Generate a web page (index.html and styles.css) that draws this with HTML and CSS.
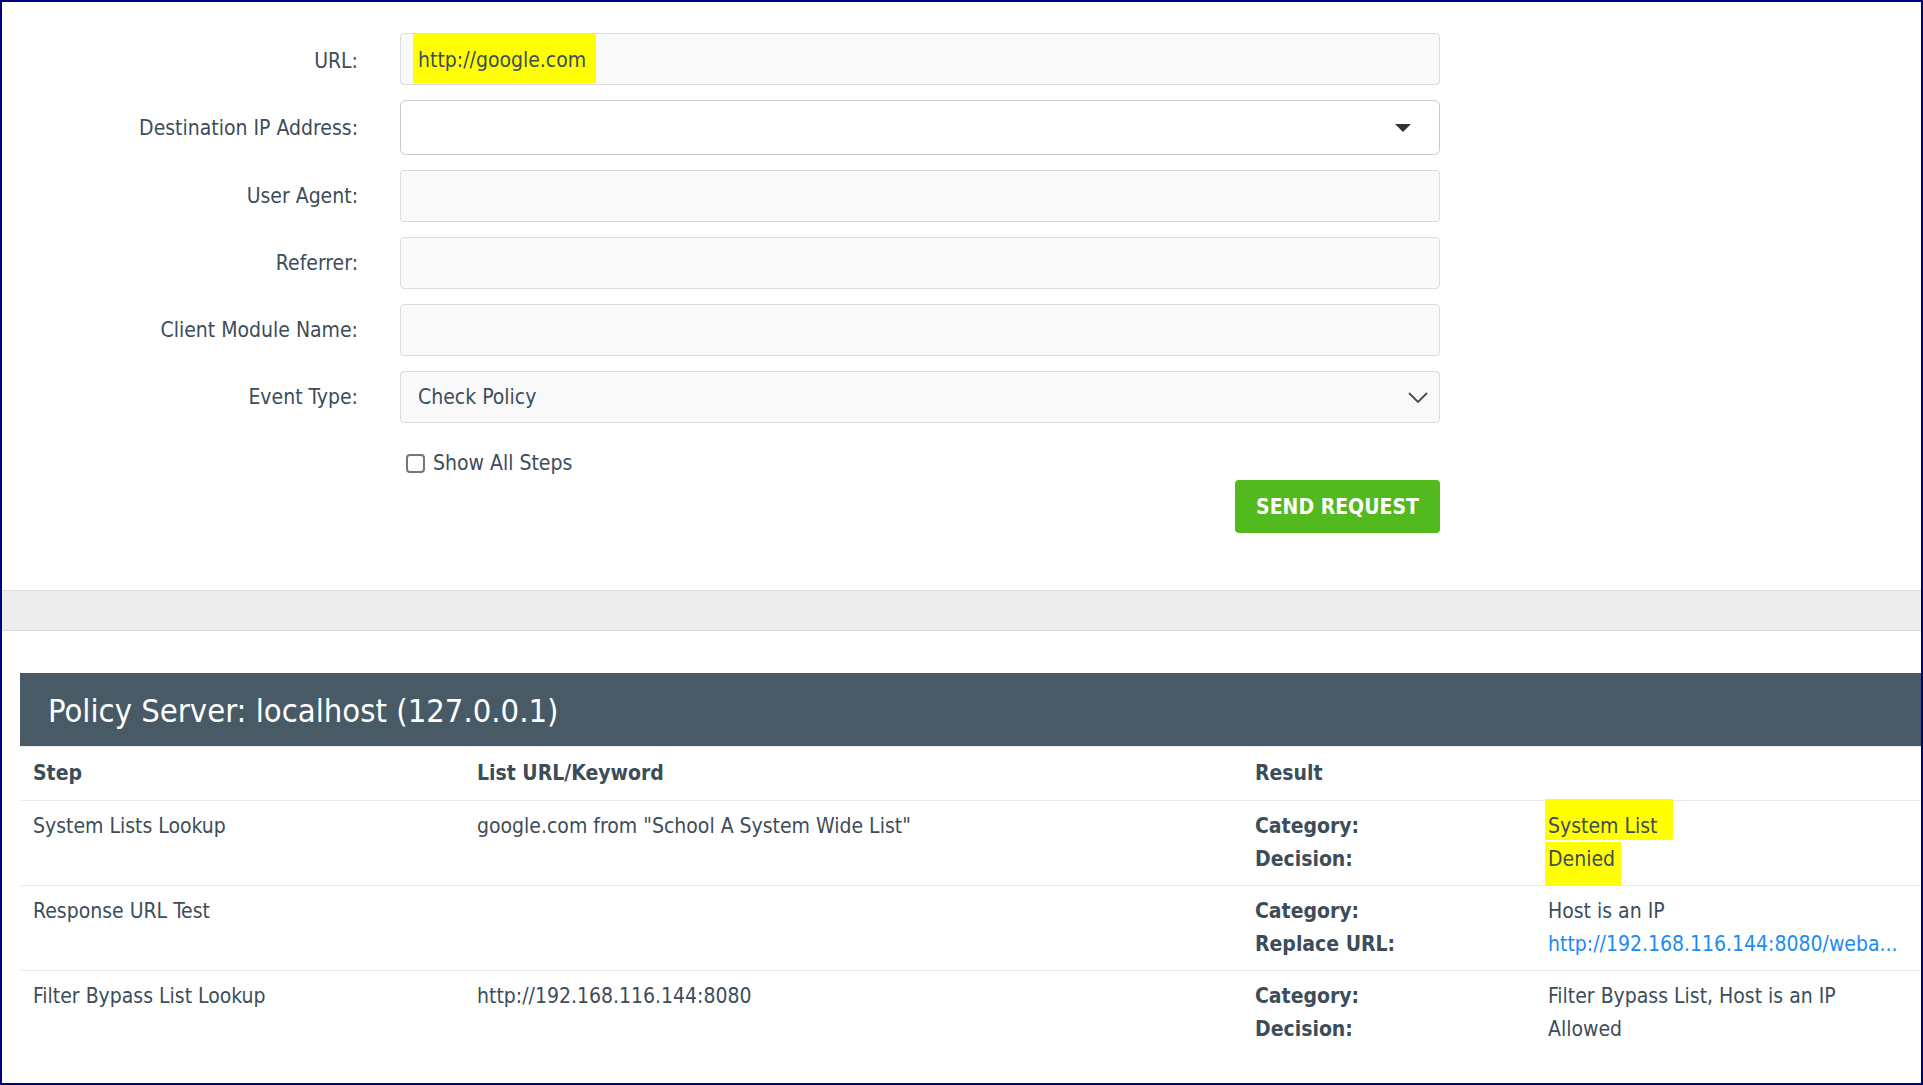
FILE: index.html
```html
<!DOCTYPE html>
<html lang="en">
<head>
    <meta charset="UTF-8">
    <meta name="viewport" content="width=device-width, initial-scale=1.0">
    <title>Test Policy</title>
    <link rel="stylesheet" href="styles.css">
</head>
<body>
    <div class="frame">
        <form class="test-form">
            <label class="form-label label-url">URL:</label>
            <div class="field">
                <span class="marker marker-url">http://google.com</span>
            </div>

            <label class="form-label">Destination IP Address:</label>
            <div class="select select-white">
                <span></span>
                <svg class="caret" width="16" height="8" viewBox="0 0 16 8"><path d="M0 0h16L8 8z" fill="#333"/></svg>
            </div>

            <label class="form-label">User Agent:</label>
            <input class="field" type="text">

            <label class="form-label">Referrer:</label>
            <input class="field" type="text">

            <label class="form-label">Client Module Name:</label>
            <input class="field" type="text">

            <label class="form-label">Event Type:</label>
            <div class="select">
                <span>Check Policy</span>
                <svg class="chevron" width="20" height="11" viewBox="0 0 20 11"><path d="M1 1l9 9 9-9" fill="none" stroke="#3c4d59" stroke-width="1.8"/></svg>
            </div>

            <div class="form-actions">
                <label class="check">
                    <input type="checkbox">
                    <span>Show All Steps</span>
                </label>
                <button type="button" class="send-button">Send Request</button>
            </div>
        </form>

        <div class="band"></div>

        <section class="results">
            <h2 class="server-title">Policy Server: localhost (127.0.0.1)</h2>
            <table class="steps">
                <colgroup>
                    <col class="col-step">
                    <col class="col-list">
                    <col class="col-result">
                    <col>
                </colgroup>
                <thead>
                    <tr>
                        <th>Step</th>
                        <th>List URL/Keyword</th>
                        <th>Result</th>
                        <th></th>
                    </tr>
                </thead>
                <tbody>
                    <tr>
                        <td>System Lists Lookup</td>
                        <td>google.com from "School A System Wide List"</td>
                        <td class="result-label">Category:<br>Decision:</td>
                        <td>
                            <span class="marker marker-first">System List</span><br>
                            <span class="marker marker-second">Denied</span>
                        </td>
                    </tr>
                    <tr>
                        <td>Response URL Test</td>
                        <td></td>
                        <td class="result-label">Category:<br>Replace URL:</td>
                        <td>
                            Host is an IP<br>
                            <a class="link" href="#">http://192.168.116.144:8080/weba...</a>
                        </td>
                    </tr>
                    <tr>
                        <td>Filter Bypass List Lookup</td>
                        <td>http://192.168.116.144:8080</td>
                        <td class="result-label">Category:<br>Decision:</td>
                        <td>Filter Bypass List, Host is an IP<br>Allowed</td>
                    </tr>
                </tbody>
            </table>
        </section>
    </div>
</body>
</html>
```

FILE: styles.css
```css
body {
    margin: 0;
    font-family: "DejaVu Sans Condensed", "DejaVu Sans", sans-serif;
    font-stretch: condensed;
    font-size: 21px;
    color: #3c4d59;
    background: white;
}

.frame {
    width: 1923px;
    height: 1085px;
    box-sizing: border-box;
    border: 2px solid #00007f;
    overflow: hidden;
}

/* formulario */
.test-form {
    display: grid;
    grid-template-columns: 356px 1040px;
    column-gap: 42px;
    row-gap: 15px;
    padding-top: 31px;
    margin-bottom: 57px;
}

.form-label {
    align-self: center;
    text-align: right;
}

.label-url {
    padding-top: 3px;
}

.field {
    box-sizing: border-box;
    height: 52px;
    margin: 0;
    padding: 0 17px;
    display: flex;
    align-items: stretch;
    background: #f9f9f9;
    border: 1px solid #dcdcdc;
    border-radius: 4px;
    font: inherit;
    color: inherit;
}

.select {
    box-sizing: border-box;
    height: 52px;
    padding: 0 11px 0 17px;
    display: flex;
    align-items: center;
    justify-content: space-between;
    background: #f9f9f9;
    border: 1px solid #dcdcdc;
    border-radius: 4px;
}

.select-white {
    height: 55px;
    padding-right: 28px;
    background: white;
    border-color: #c9c9c9;
    border-radius: 6px;
}

.form-actions {
    grid-column: 2;
    display: flex;
    flex-direction: column;
    margin-top: 15px;
}

.check {
    display: flex;
    align-items: center;
    gap: 8px;
    height: 20px;
    padding-left: 6px;
}

.check input {
    appearance: none;
    width: 19px;
    height: 19px;
    margin: 0;
    border: 2px solid #767676;
    border-radius: 4px;
    background: white;
}

.send-button {
    align-self: flex-end;
    margin-top: 7px;
    width: 205px;
    height: 53px;
    padding: 0;
    background-color: #52b91f;
    color: white;
    border: none;
    border-radius: 4px;
    font: inherit;
    font-weight: bold;
    text-transform: uppercase;
}

.band {
    height: 39px;
    background: #ededed;
    border-top: 1px solid #dcdcdc;
    border-bottom: 1px solid #dcdcdc;
}

/* risultati */
.results {
    padding: 42px 0 0 18px;
}

.server-title {
    margin: 0;
    height: 69px;
    padding: 4px 0 0 28px;
    background: #475a66;
    color: white;
    font-size: 32.5px;
    font-weight: normal;
    line-height: 69px;
}

.steps {
    width: 1901px;
    table-layout: fixed;
    border-collapse: collapse;
    line-height: 33px;
}

.col-step {
    width: 444px;
}

.col-list {
    width: 778px;
}

.col-result {
    width: 293px;
}

.steps th {
    text-align: left;
    padding: 10px 13px;
    border-top: 1px solid #eeeeee;
    border-bottom: 1px solid #e8e8e8;
}

.steps td {
    vertical-align: top;
    padding: 9px 13px;
    border-bottom: 1px solid #e8e8e8;
    white-space: nowrap;
}

.steps tbody tr:last-child td {
    border-bottom: none;
}

.result-label {
    font-weight: bold;
}

.link {
    color: #1a8cf2;
    text-decoration: none;
}

/* evidenziatore */
.marker {
    background: #ffff00;
}

.marker-url {
    display: flex;
    align-items: center;
    margin: 0 0 1px -5px;
    padding: 3px 10px 0 5px;
}

.marker-first {
    margin-left: -3px;
    padding: 15px 16px 2px 3px;
}

.marker-second {
    margin-left: -3px;
    padding: 5px 6px 15px 3px;
}
```
